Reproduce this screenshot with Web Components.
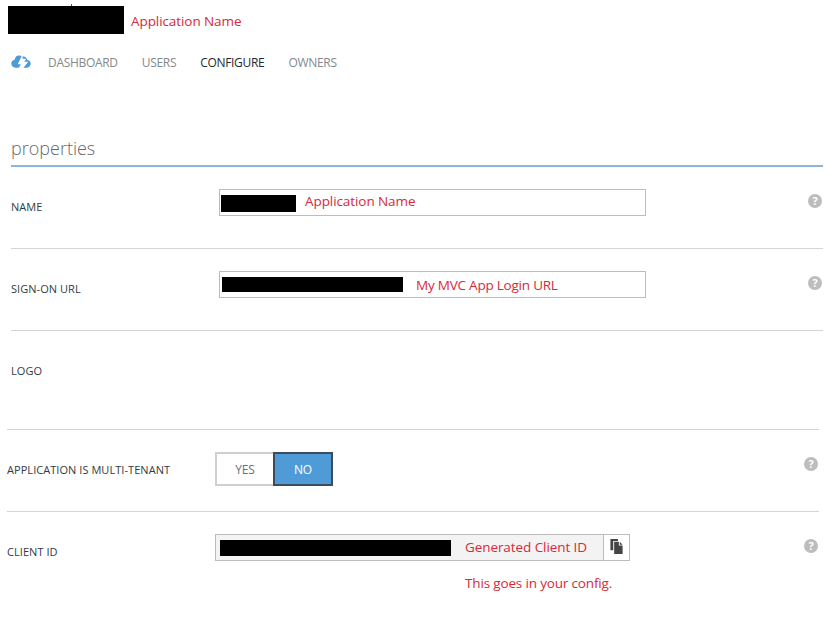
<!DOCTYPE html>
<html><head><meta charset="utf-8"><style>
html,body{margin:0;padding:0;background:#fff;}
body{width:835px;height:631px;overflow:hidden;font-family:"Open Sans","Noto Sans",sans-serif;}
</style></head><body>
<app-page></app-page>
<script>
const RED='#d62a38';
function def(name,html,setup){customElements.define(name,class extends HTMLElement{constructor(){super();this.attachShadow({mode:'open'}).innerHTML=html;}connectedCallback(){if(setup)setup(this);}});}

def('red-note',`<style>:host{display:inline-block;color:${RED};font:13.5px/18px "Open Sans",sans-serif;white-space:nowrap;letter-spacing:var(--ls,-.08px)}</style><slot></slot>`);
def('black-out',`<style>:host{display:block;background:#000;flex:none;width:var(--w);height:var(--h);margin-left:var(--l,0);margin-top:var(--t,0)}</style>`);

def('app-header',`<style>:host{display:flex;align-items:center;height:28px;padding:6px 0 0 8px}
.m{position:relative}.m::before{content:"";position:absolute;left:63px;top:-2px;width:1px;height:2px;background:#555}
red-note{margin-left:7px;margin-top:2px}</style>
<div class="m"><black-out style="--w:116px;--h:28px"></black-out></div><red-note>Application Name</red-note>`);

def('nav-tabs',`<style>:host{display:flex;align-items:center;height:22px;margin-top:18px;padding-left:11px;font:12px/22px "Open Sans",sans-serif;color:#85888b;letter-spacing:-.31px}
svg{width:21px;height:14px;margin-right:16px;flex:none;margin-top:-2px}
span{margin-right:24px}.a{color:#1d2a35}</style>
<svg viewBox="0 0 21 14"><path fill="#4c9ad6" d="M10.6 1.2 9 .6C7.8.2 6.4.4 5.4 1.2 4.4 2 3.9 3.2 4 4.4 1.9 4.7.3 6.4.3 8.5c0 2.3 1.900 4.200 4.200 4.200h3.300l2.100-3.400H6.700l3.900-8.100z"/><path fill="#4c9ad6" d="M11.800 3.800h3.300l-1.700 3h3.900l-4.900 5.900h3.300c2.200 0 4-1.800 4-4 0-2.100-1.600-3.800-3.600-4-.3-1.700-1.700-3-3.500-3.100-.5 0-.9.1-1.300.2z"/></svg>
<span>DASHBOARD</span><span>USERS</span><span class="a">CONFIGURE</span><span>OWNERS</span>`);

def('section-title',`<style>:host{display:block;margin:57px 12px 0 11px;height:36px;box-sizing:border-box;border-bottom:2px solid #8fb6d6;font:300 18px/34px "Open Sans",sans-serif;color:#66696d}</style><slot></slot>`);

def('help-dot',`<style>:host{display:flex;width:14px;height:14px;border-radius:50%;background:#bdbdbd;color:#fff;align-items:center;justify-content:center;font:700 11px/14px "Open Sans",sans-serif;margin-top:5px}</style>?`);

def('form-row',`<style>:host{display:grid;grid-template-columns:208px 1fr auto;box-sizing:border-box;height:var(--h,82px);width:812px;margin-left:var(--x,11px);padding:22px 1px 0 0;border-top:var(--bt,0);border-bottom:var(--b,1px solid #d4d4d4);align-items:start}
.l{font:11px/16px "Open Sans",sans-serif;color:#333b42;margin-top:10px;white-space:nowrap;letter-spacing:.05px}</style>
<div class="l"><slot name="label"></slot></div><div><slot></slot></div><slot name="help"></slot>`);

def('text-field',`<style>:host{display:flex;align-items:center;box-sizing:border-box;width:427px;height:27px;border:1px solid #bcbcbc;background:#fff}</style><slot></slot>`);

def('yes-no',`<style>:host{display:flex;height:34px;width:118px;font:12px/1 "Open Sans",sans-serif}
div{box-sizing:border-box;display:flex;align-items:center;justify-content:center;letter-spacing:-.2px;padding-top:1px}
.y{width:58px;border:2px solid #cfcfcf;border-right:0;color:#6d7074}
.n{width:60px;border:2px solid #3d4c5c;background:#4f9bd8;color:#fff}</style>
<div class="y">YES</div><div class="n">NO</div>`);

def('copy-field',`<style>:host{display:flex;box-sizing:border-box;width:415px;height:27px;border:1px solid #bcbcbc;background:#fff}
.v{flex:1;display:flex;align-items:center;background:#f3f3f3;border-right:1px solid #bcbcbc}
.c{width:25px;flex:none;display:flex;align-items:center;justify-content:center}svg{width:13px;height:15px;margin-top:-2px}</style>
<div class="v"><slot></slot></div><div class="c"><svg viewBox="0 0 13 16"><path fill="#444" d="M0 0h8v2H3v10H0z"/><path fill="#444" d="M4 3h5v4h4v9H4z"/><path fill="#444" d="M10 3l3 3h-3z"/></svg></div>`);

def('app-page',`<style>:host{display:block}
.note{margin:13px 0 0 250px;display:block;--ls:-.16px}
</style>
<app-header></app-header>
<nav-tabs></nav-tabs>
<section-title>properties</section-title>
<form-row>
  <span slot="label">NAME</span>
  <text-field><black-out style="--w:75px;--h:17px;--l:1px;--t:2px"></black-out><red-note style="margin:-3px 0 0 9px">Application Name</red-note></text-field>
  <help-dot slot="help"></help-dot>
</form-row>
<form-row>
  <span slot="label">SIGN-ON URL</span>
  <text-field><black-out style="--w:181px;--h:15px;--l:2px"></black-out><red-note style="margin-left:13px;--ls:-.22px">My MVC App Login URL</red-note></text-field>
  <help-dot slot="help"></help-dot>
</form-row>
<form-row style="--h:98px;--b:0"><span slot="label">LOGO</span></form-row>
<form-row style="--x:7px;--h:83px;--bt:1px solid #d4d4d4">
  <span slot="label">APPLICATION IS MULTI-TENANT</span>
  <yes-no></yes-no>
  <help-dot slot="help"></help-dot>
</form-row>
<form-row style="--x:7px;--b:0;--h:100px">
  <span slot="label">CLIENT ID</span>
  <div>
    <copy-field><black-out style="--w:231px;--h:16px;--l:4px;--t:1px"></black-out><red-note style="margin:-2px 0 0 14px">Generated Client ID</red-note></copy-field>
    <red-note class="note">This goes in your config.</red-note>
  </div>
  <help-dot slot="help"></help-dot>
</form-row>`);
</script>
</body></html>
